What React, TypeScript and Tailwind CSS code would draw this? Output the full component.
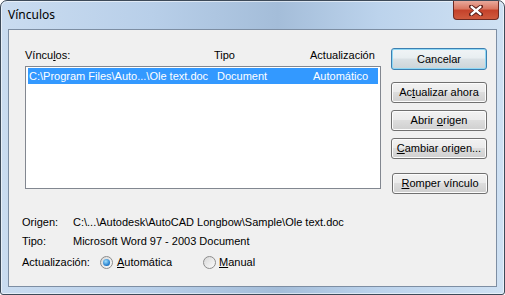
import React from "react";

const font = { fontFamily: '"Liberation Sans", Arial, sans-serif' };

const U = ({ children }: { children: React.ReactNode }) => <span className="underline underline-offset-[1px]">{children}</span>;

const Button = ({ children, primary, className = "" }: { children: React.ReactNode; primary?: boolean; className?: string }) => (
  <div
    className={`w-[96px] h-[21px] flex items-center justify-center rounded-[3px] border text-[11px] text-black ${
      primary
        ? "h-[22px] border-[#3c7fb1] shadow-[inset_0_0_0_1px_#8fd8f5] bg-[linear-gradient(180deg,#f0f4f6_0%,#e8eef1_45%,#dae1e5_50%,#ccd4d8_100%)]"
        : "border-[#707070] shadow-[inset_0_0_0_1px_#fcfcfc] bg-[linear-gradient(180deg,#f2f2f2_0%,#ebebeb_45%,#dddddd_50%,#cfcfcf_100%)]"
    } ${className}`}
  >
    <span className="leading-none">{children}</span>
  </div>
);

const Radio = ({ checked }: { checked?: boolean }) => (
  <div className="w-[13px] h-[13px] rounded-full border border-[#8c8c8c] bg-[linear-gradient(135deg,#d8d8d8,#fbfbfb)] flex items-center justify-center">
    {checked && <div className="w-[7px] h-[7px] rounded-full bg-[radial-gradient(circle_at_40%_35%,#9fe0ff,#1b76c8_70%,#0d4f8c)]" />}
  </div>
);

export default function App() {
  return (
    <div style={font} className="w-[505px] h-[295px] flex flex-col rounded-t-[7px] rounded-b-[3px] border border-[#3d4a59] shadow-[inset_0_0_0_1px_rgba(255,255,255,0.55)] bg-[linear-gradient(90deg,#cadcf0_0%,#b8cfe9_30%,#a4bdd9_55%,#bcd3ec_75%,#cfe1f3_100%)] overflow-hidden">
      <div className="h-[28px] flex items-start justify-between">
        <div className="pl-[7px] pt-[7px] text-[12px] leading-[14px] text-black" style={{ fontFamily: '"Noto Sans", "Liberation Sans", sans-serif' }}>
          Vínculos
        </div>
        <div className="mr-[5px] w-[46px] h-[19px] rounded-b-[4px] border border-t-0 border-[#6e2a22] bg-[linear-gradient(180deg,#e9a99c_0%,#d9755f_45%,#c4412a_50%,#cf5a3e_100%)] flex items-center justify-center">
          <svg width="14" height="11" viewBox="0 0 14 11">
            <path d="M2 1.5 L7 4.8 L12 1.5 M2 9.5 L7 6.2 L12 9.5" fill="none" stroke="#5a1e18" strokeWidth="4" strokeLinecap="round" />
            <path d="M2.6 1.8 L11.4 9.2 M11.4 1.8 L2.6 9.2" fill="none" stroke="#ffffff" strokeWidth="2.4" strokeLinecap="round" />
          </svg>
        </div>
      </div>
      <div className="flex-1 mx-[7px] mb-[7px] border border-[#7d8ea3] bg-[#f0f0f0] text-[11px] text-black">
        <div className="flex pt-[18px] pl-[16px]">
          <div className="w-[356px]">
            <div className="relative h-[14px] leading-[14px]">
              <span className="absolute left-0">Víncu<U>l</U>os:</span>
              <span className="absolute left-[189px]">Tipo</span>
              <span className="absolute left-[285px]">Actualización</span>
            </div>
            <div className="mt-[4px] h-[123px] border border-[#828790] bg-white pt-[1px] px-[2px]">
              <div className="h-[16px] bg-[#3399ff] text-white flex items-center pl-[1px] leading-none">
                <span className="w-[188px]">C:\Program Files\Auto...\Ole text.doc</span>
                <span className="w-[96px]">Document</span>
                <span>Automático</span>
              </div>
            </div>
          </div>
          <div className="ml-[10px] flex flex-col">
            <Button primary>Cancelar</Button>
            <Button className="mt-[12px]">
              Ac<U>t</U>ualizar ahora
            </Button>
            <Button className="mt-[7px]">
              Abrir <U>o</U>rigen
            </Button>
            <Button className="mt-[7px]">
              <U>C</U>ambiar origen...
            </Button>
            <Button className="mt-[14px] ml-[1px]">
              <U>R</U>omper vínculo
            </Button>
          </div>
        </div>
        <div className="mt-[22px] pl-[13px]">
          <div className="flex h-[19px] leading-[13px]">
            <span className="w-[51px]">Origen:</span>
            <span>C:\...\Autodesk\AutoCAD Longbow\Sample\Ole text.doc</span>
          </div>
          <div className="flex h-[19px] leading-[13px]">
            <span className="w-[51px]">Tipo:</span>
            <span>Microsoft Word 97 - 2003 Document</span>
          </div>
          <div className="flex items-center h-[16px]">
            <span className="w-[78px]">Actualización:</span>
            <div className="w-[103px] flex items-center">
              <Radio checked />
              <span className="ml-[4px]">
                <U>A</U>utomática
              </span>
            </div>
            <div className="flex items-center">
              <Radio />
              <span className="ml-[3px]">
                <U>M</U>anual
              </span>
            </div>
          </div>
        </div>
      </div>
    </div>
  );
}
